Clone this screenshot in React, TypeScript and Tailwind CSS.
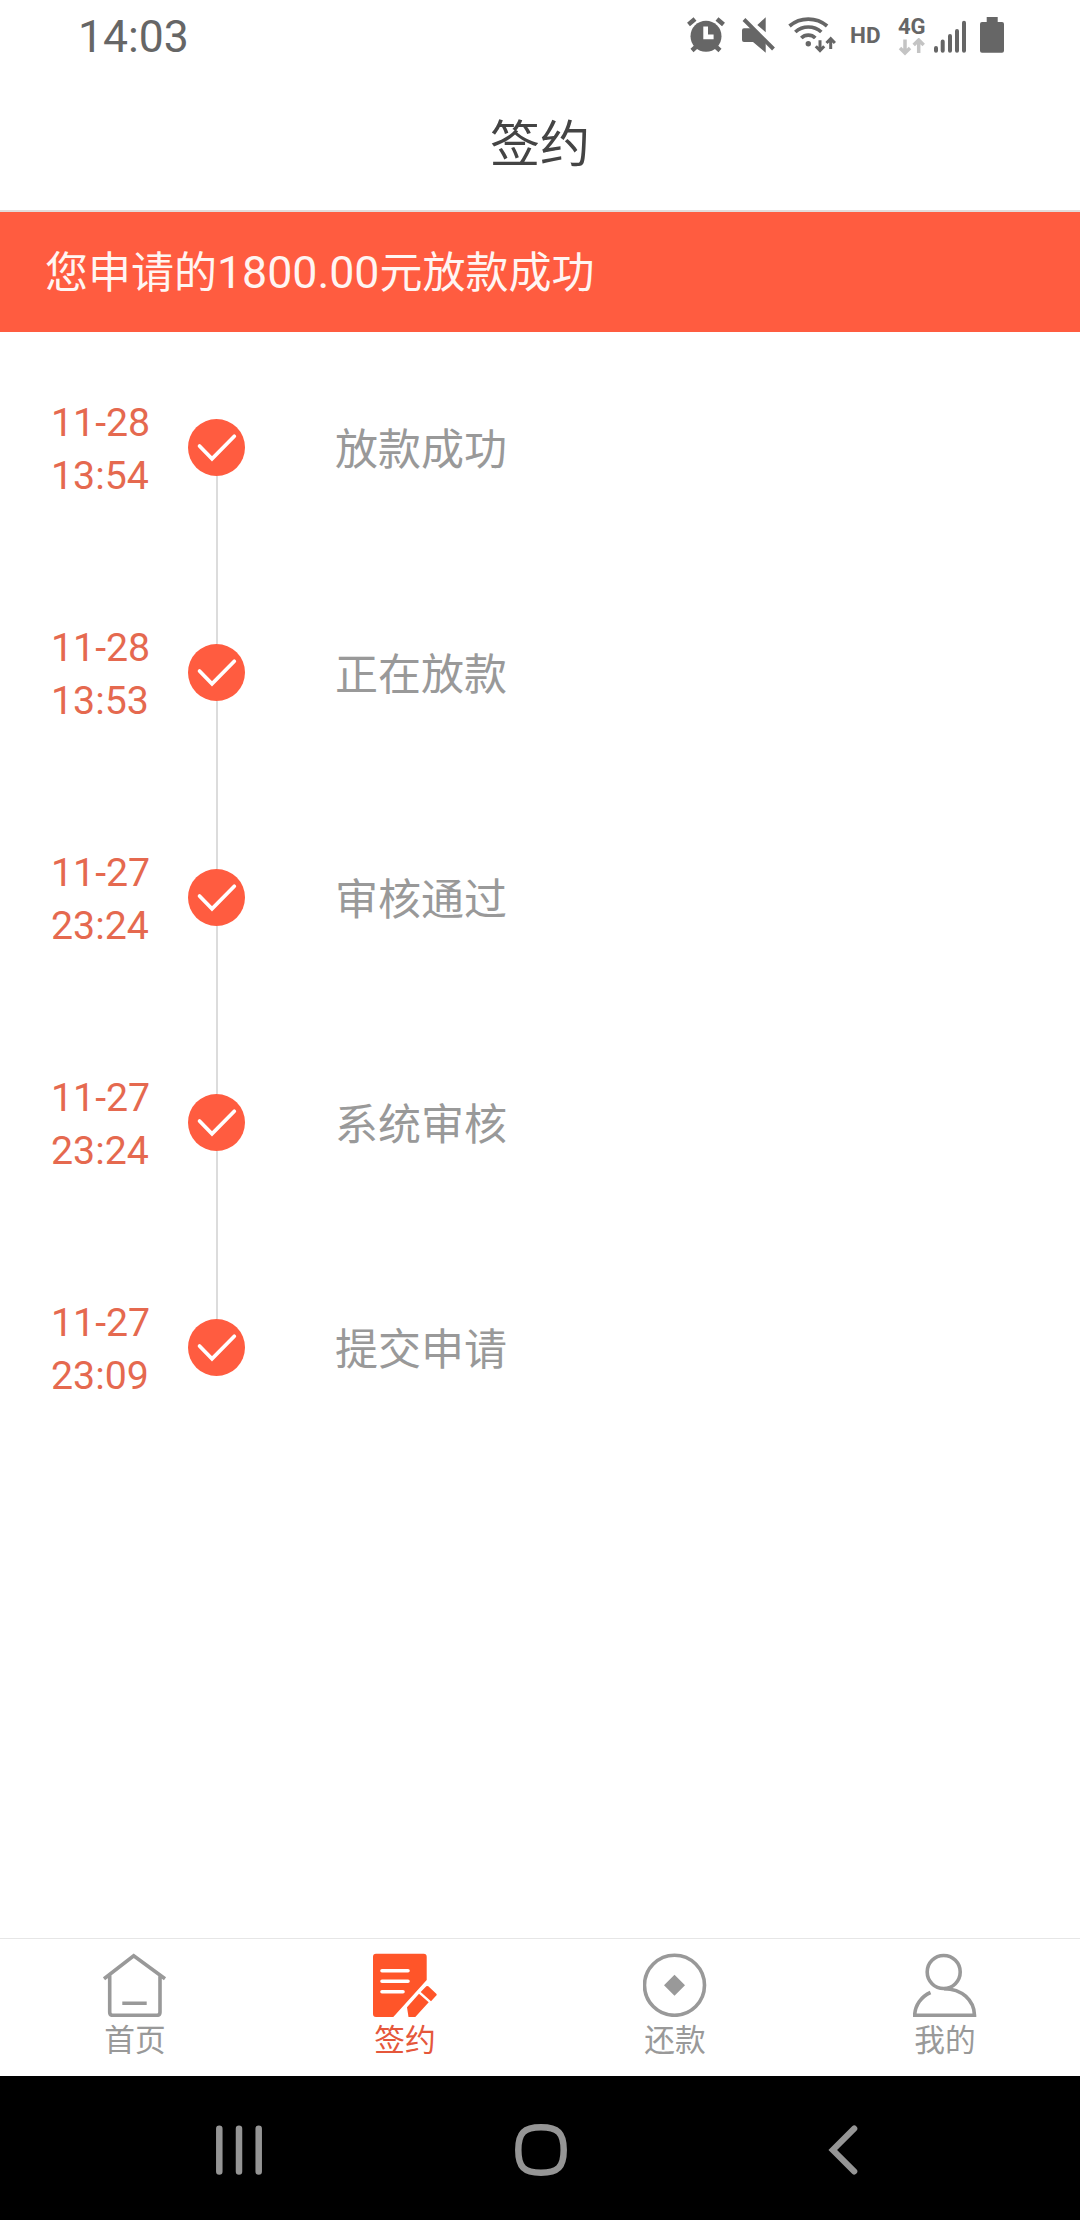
import type { ReactNode } from 'react'

const STEPS = [
  { date: '11-28', time: '13:54', label: '放款成功' },
  { date: '11-28', time: '13:53', label: '正在放款' },
  { date: '11-27', time: '23:24', label: '审核通过' },
  { date: '11-27', time: '23:24', label: '系统审核' },
  { date: '11-27', time: '23:09', label: '提交申请' },
]

function StatusBar() {
  return (
    <div className="flex h-[72px] items-start text-[#666]">
      <div className="w-[686px] pl-[78px] pt-[10px] text-[44.5px] leading-[54px]">14:03</div>
      {/* alarm */}
      <svg className="mt-4 h-[38px] w-10 shrink-0" viewBox="0 0 40 38">
        <circle cx="20" cy="20.3" r="15.5" fill="currentColor" />
        <path
          d="M2.5 8.5 9 3M31 3l6.5 5.500M6 34.500l6-5.500M34 34.500l-6-5.500"
          stroke="currentColor"
          strokeWidth="4.500"
        />
        <path d="M17.300 10.500h4.700v8h5.600v4.700H17.300z" fill="#fff" />
      </svg>
      {/* muted */}
      <svg className="ml-4 mt-4 h-[38px] w-[34px] shrink-0" viewBox="0 0 34 38">
        <path
          d="M2 12.3H9L23.700 27V36.700L11 26H2q-2 0-2-2v-9.700q0-2 2-2zM15.300 9l8.400-7.700v15z"
          fill="currentColor"
        />
        <path d="M2 3.500 31.500 33" stroke="currentColor" strokeWidth="4" />
      </svg>
      {/* wifi with traffic arrows */}
      <svg
        className="ml-[11px] mt-4 h-[38px] w-[50px] shrink-0"
        viewBox="0 0 50 38"
        fill="none"
        stroke="currentColor"
        strokeWidth="3.700"
      >
        <path d="M2.500 10a29 29 0 0 1 37.600 0M8.300 16a19.400 19.400 0 0 1 26 0M14.300 22a10 10 0 0 1 14 0" />
        <circle cx="21.300" cy="27.700" r="2.700" fill="currentColor" stroke="none" />
        <path d="M33 24.300v10.500M28.800 30.300l4.200 4.400 4.200-4.400M43.700 33V22.500M39.500 27l4.200-4.400 4.200 4.400" strokeWidth="3" />
      </svg>
      <span className="ml-[13px] mt-[21px] w-[48px] text-[22.5px] font-bold leading-7">HD</span>
      <div className="w-[35px]">
        <div className="mt-[14px] text-[22px] font-bold leading-[26px]">4G</div>
        <svg className="-mt-0.5 h-[18px] w-7" viewBox="0 0 28 18" fill="none" stroke="#c4c4c4" strokeWidth="3.500">
          <path d="M7 1.500v13M2 10l5 5 5-5M20.700 15V3M15.700 7l5-5 5 5" />
        </svg>
      </div>
      <svg
        className="mt-4 h-[38px] w-[34px] shrink-0"
        viewBox="0 0 34 38"
        stroke="currentColor"
        strokeWidth="4"
        strokeLinecap="round"
      >
        <path d="M3 32v2.700M9.700 25.500v9.200M17 20v14.700M24 15v19.700M31 6.700v28" />
      </svg>
      <svg className="ml-[13px] mt-4 h-[38px] w-6 shrink-0" viewBox="0 0 24 38" fill="currentColor">
        <path d="M6.700 1h11v5H22q2 0 2 2v26.700q0 2-2 2H2q-2 0-2-2V8q0-2 2-2h4.700z" />
      </svg>
    </div>
  )
}

function CheckDot() {
  return (
    <svg className="h-[57px] w-[57px] shrink-0" viewBox="0 0 57 57">
      <circle cx="28.500" cy="28.500" r="28.500" fill="#ff5c40" />
      <path
        d="M11.500 27 24 39.800 46.300 17.200"
        fill="none"
        stroke="#fff"
        strokeWidth="3.700"
        strokeLinecap="round"
      />
    </svg>
  )
}

function Timeline() {
  return (
    <ul className="flex-1 pt-[87px]">
      {STEPS.map((step, i) => (
        <li key={i} className="flex h-[225px]">
          <div className="-mt-[22px] w-[188px] pl-[51px] text-[39.3px] leading-[53px] text-[#e5694f]">
            <div>{step.date}</div>
            <div>{step.time}</div>
          </div>
          <div className="flex w-[57px] flex-col items-center">
            <CheckDot />
            {i < STEPS.length - 1 && <div className="w-0.5 flex-1 bg-[#dcdcdc]" />}
          </div>
          <div className="pl-[90px] pt-[3px] text-[43px] leading-[57px] text-[#999]">{step.label}</div>
        </li>
      ))}
    </ul>
  )
}

function TabIcon({ children }: { children: ReactNode }) {
  return (
    <svg className="h-16 w-16" viewBox="0 0 64 64" fill="none" stroke="#999" strokeWidth="3.600">
      {children}
    </svg>
  )
}

function Tab({ label, active, children }: { label: string; active?: boolean; children: ReactNode }) {
  return (
    <div className="flex flex-1 flex-col items-center pt-[14px]">
      <TabIcon>{children}</TabIcon>
      <span className={`mt-0.5 text-[30.7px] leading-[44px] ${active ? 'text-[#e5573b]' : 'text-[#999]'}`}>
        {label}
      </span>
    </div>
  )
}

function TabBar() {
  return (
    <nav className="flex h-[138px] border-t border-[#e6e6e6]">
      <Tab label="首页">
        <path d="M1 25.700 30.700 2.800 62 25.700M6.700 22v37.300q0 3 3 3H54q3 0 3-3V22M19.300 50.300h24.400" />
      </Tab>
      <Tab label="签约" active>
        <g fill="#ff5529" stroke="none">
          <path d="M3 .7h47.700q3 0 3 3V27L20.300 64H3q-3 0-3-3V3.700q0-3 3-3z" />
          <path d="M34 54.300 46 40.700l9.700 8.600L42.300 64H35.500zM47.700 39l5.600-5.700q1-.8 2 0l8 7.500q.8.800 0 1.700L58 48.300z" />
        </g>
        <path d="M9 17.700h26M9 28.300h26M9 38.700h21" stroke="#fff" strokeLinecap="round" />
      </Tab>
      <Tab label="还款">
        <circle cx="31.500" cy="32.300" r="30" />
        <path d="M31.500 21.800 42 32.300 31.500 42.800 21 32.300z" fill="#999" stroke="none" />
      </Tab>
      <Tab label="我的">
        <circle cx="30.700" cy="19" r="16.500" />
        <path d="M17.500 39.500C8.500 43.500 2 52 1.700 62.300h59.800C61.200 47.500 49 35.700 31 35.700" />
      </Tab>
    </nav>
  )
}

function SystemNav() {
  return (
    <div className="flex h-36 items-center bg-black pt-[3px] text-[#959595]">
      <svg className="ml-[215px] h-[52px] w-12" viewBox="0 0 48 52" stroke="currentColor" strokeWidth="6.500" strokeLinecap="round">
        <path d="M4.300 4.800v42.600M24 4.800v42.600M43.700 4.800v42.600" />
      </svg>
      <svg className="ml-[252px] h-[52px] w-[52px]" viewBox="0 0 52 52" fill="none" stroke="currentColor" strokeWidth="6.500">
        <path d="M26 3.300C43 3.300 48.700 9 48.700 26S43 48.700 26 48.700 3.300 43 3.300 26 9 3.300 26 3.300z" />
      </svg>
      <svg className="ml-[261px] h-[52px] w-[32px]" viewBox="0 0 32 52" fill="none" stroke="currentColor" strokeWidth="6" strokeLinecap="round">
        <path d="M26.300 4.500 4.700 26l21.600 21.500" />
      </svg>
    </div>
  )
}

export default function App() {
  return (
    <div className="flex h-[2220px] w-[1080px] flex-col overflow-hidden bg-white font-['Roboto','Noto_Sans_CJK_SC',sans-serif]">
      <StatusBar />
      <header className="flex h-[140px] justify-center border-b-2 border-[#e2dcdb] pt-[38px] text-[50px] leading-[70px] text-[#444]">
        签约
      </header>
      <div className="h-[120px] bg-[#ff5c40] pl-[45px] pt-0.5 text-[43px] leading-[118px] text-[#fff5f2]">
        您申请的<span className="text-[44.700px]">1800.00</span>元放款成功
      </div>
      <Timeline />
      <TabBar />
      <SystemNav />
    </div>
  )
}
